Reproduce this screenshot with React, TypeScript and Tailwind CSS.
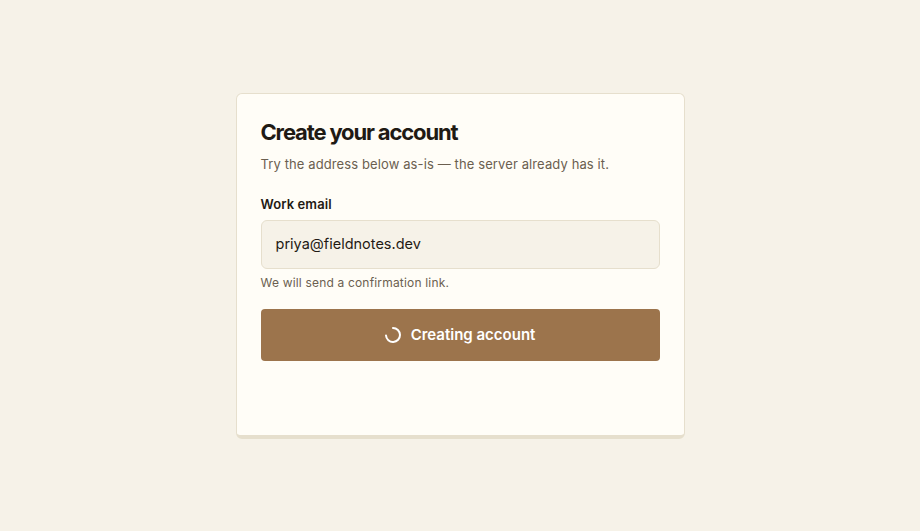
export default function App() {
  return (
    <div className="min-h-screen bg-[#f6f2e8] flex items-center justify-center font-['Inter',sans-serif]">
      <div className="w-[449px] h-[346px] bg-[#fffdf7] border border-[#e6dfcd] border-b-4 rounded-md px-6 pt-6 box-border">
        <h1 className="text-[22px] leading-7 font-bold tracking-[-1.15px] text-[#1f1a14]">Create your account</h1>
        <p className="mt-2 text-[13px] leading-5 tracking-[0.11px] text-[#6b5f50]">Try the address below as-is — the server already has it.</p>
        <label className="block mt-5 text-[13px] leading-5 font-semibold tracking-[0.1px] text-[#1f1a14]">Work email</label>
        <div className="mt-1.5 h-[49px] flex items-center px-[14px] bg-[#f6f2e8] border border-[#e6dfcd] rounded-md text-[14.5px] text-[#1f1a14]">priya@fieldnotes.dev</div>
        <p className="mt-[5px] text-xs leading-[18px] tracking-[0.18px] text-[#6b5f50]">We will send a confirmation link.</p>
        <button className="mt-[17px] w-full h-[52px] pt-px flex items-center justify-center gap-2.5 bg-[#9c744c] rounded text-white text-[15px] font-semibold">
          <svg width="16" height="16" viewBox="0 0 16 16" fill="none" className="-mt-px"><path d="M8 1A7 7 0 1 1 1 8.5" stroke="#fff" strokeWidth="2" strokeLinecap="round" /></svg>
          Creating account
        </button>
      </div>
    </div>
  );
}
